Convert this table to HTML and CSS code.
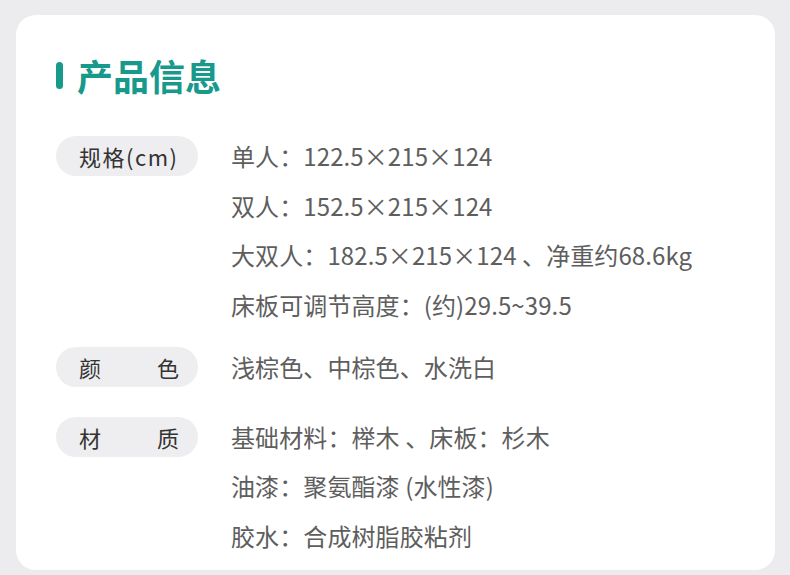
FILE: index.html
```html
<!DOCTYPE html>
<html lang="zh-CN">
<head>
  <meta charset="UTF-8" />
  <title>产品信息</title>
  <meta name="viewport" content="width=device-width, initial-scale=1.0" />
  <link rel="stylesheet" href="styles.css">
</head>
<body>
  <div class="card">
    <h1 class="title">产品信息</h1>

    <div class="row">
      <div class="label label-plain">规格(cm)</div>
      <div class="values">
        <p>单人：122.5×215×124</p>
        <p>双人：152.5×215×124</p>
        <p>大双人：182.5×215×124 、净重约68.6kg</p>
        <p>床板可调节高度：(约)29.5~39.5</p>
      </div>
    </div>

    <div class="row row-color">
      <div class="label">颜色</div>
      <div class="values">
        <p>浅棕色、中棕色、水洗白</p>
      </div>
    </div>

    <div class="row">
      <div class="label">材质</div>
      <div class="values">
        <p>基础材料：榉木 、床板：杉木</p>
        <p>油漆：聚氨酯漆 (水性漆)</p>
        <p>胶水：合成树脂胶粘剂</p>
      </div>
    </div>
  </div>
</body>
</html>
```

FILE: styles.css
```css
* {
  box-sizing: border-box;
}

body {
  margin: 0;
  padding: 15px 15px 0 16px;
  background: #ececee;
  font-family: "Noto Sans CJK SC", "Noto Sans", sans-serif;
  height: 575px;
  overflow: hidden;
}

.card {
  background: #fff;
  border-radius: 20px;
  height: 555px;
  padding: 37px 0 0 40px;
}

.title {
  margin: 0 0 33px;
  display: flex;
  align-items: center;
  gap: 14px;
  font-size: 36px;
  line-height: 46px;
  font-weight: 700;
  color: #17998b;
}

.title::before {
  content: "";
  width: 7px;
  height: 27px;
  border-radius: 4px;
  background: #17998b;
}

.row {
  display: flex;
  align-items: flex-start;
  margin-bottom: 13px;
}

.row-color {
  margin-bottom: 20px;
}

.label {
  flex-shrink: 0;
  width: 142px;
  height: 40px;
  margin-top: 5px;
  padding: 0 19px 0 23px;
  border-radius: 20px;
  background: #eeeef0;
  color: #333;
  font-size: 22px;
  line-height: 40px;
  text-align: justify;
  text-align-last: justify;
}

.label-plain {
  text-align: left;
  text-align-last: left;
  letter-spacing: 1.5px;
}

.values {
  margin-left: 33px;
}

.values p {
  margin: 0;
  font-size: 24px;
  font-weight: 400;
  letter-spacing: 0.1px;
  line-height: 49.5px;
  color: #5e5e5e;
}
```
